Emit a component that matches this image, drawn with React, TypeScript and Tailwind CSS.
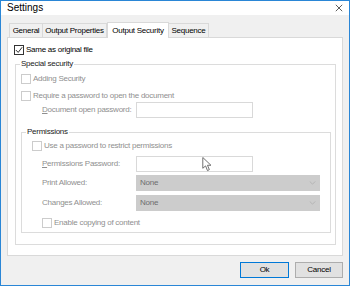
import React from "react";

function Box({ checked = false, disabled = false }: { checked?: boolean; disabled?: boolean }) {
  return (
    <span
      className={`flex h-[10px] w-[10px] shrink-0 items-center justify-center border bg-white ${
        disabled ? "border-[#cccccc]" : "border-[#333333]"
      }`}
    >
      {checked && (
        <svg viewBox="0 0 10 10" className="h-[8px] w-[8px]">
          <path d="M1 5 L4 8 L9 1.5" fill="none" stroke="#222" strokeWidth="1.2" />
        </svg>
      )}
    </span>
  );
}

function Check({ label, checked, disabled }: { label: string; checked?: boolean; disabled?: boolean }) {
  return (
    <div className="flex h-[12px] items-center gap-[2px] whitespace-nowrap">
      <Box checked={checked} disabled={disabled} />
      <span className={disabled ? "text-[#8f8f8f]" : "text-black"}>{label}</span>
    </div>
  );
}

function Field({ label, children }: { label: React.ReactNode; children: React.ReactNode }) {
  return (
    <div className="flex h-[16px] items-center">
      <span className="w-[94px] shrink-0 whitespace-nowrap text-[#8f8f8f]">{label}</span>
      {children}
    </div>
  );
}

function Select() {
  return (
    <div className="flex h-[16px] w-[184px] items-center justify-between bg-[#cccccc] pr-[4px] pl-[4px] text-[#6e6e6e]">
      <span>None</span>
      <svg viewBox="0 0 8 5" className="h-[4px] w-[7px]">
        <path d="M0.5 0.5 L4 4 L7.5 0.5" fill="none" stroke="#b0b0b0" strokeWidth="1" />
      </svg>
    </div>
  );
}

export default function App() {
  return (
    <div
      className="relative flex h-[286px] w-[350px] flex-col border border-[#2a86d6] bg-[#f0f0f0] text-[8px] leading-[12px] tracking-[-0.25px]"
      style={{ fontFamily: '"Liberation Sans", Arial, sans-serif' }}
    >
      {/* Title bar */}
      <div className="flex h-[14px] shrink-0 items-center justify-between bg-white pr-[6px] pl-[6px]">
        <span className="text-[10px] tracking-normal text-black">Settings</span>
        <svg viewBox="0 0 10 10" className="h-[8px] w-[8px]">
          <path d="M1 1 L9 9 M9 1 L1 9" stroke="#333" strokeWidth="1" />
        </svg>
      </div>

      {/* Tabs */}
      <div className="mt-[7px] flex h-[15px] items-end pl-[8px] whitespace-nowrap">
        <div className="flex h-[14px] w-[34px] items-center justify-center border border-b-0 border-[#d9d9d9] pt-[1px] text-black">
          General
        </div>
        <div className="flex h-[14px] w-[64px] items-center justify-center border border-b-0 border-l-0 border-[#d9d9d9] pt-[1px] text-black">
          Output Properties
        </div>
        <div className="relative z-10 -mb-px flex h-[16px] w-[62px] items-center justify-center border border-b-0 border-[#d9d9d9] bg-white text-black">
          Output Security
        </div>
        <div className="flex h-[14px] w-[40px] items-center justify-center border border-b-0 border-l-0 border-[#d9d9d9] pt-[1px] text-black">
          Sequence
        </div>
      </div>

      {/* Panel */}
      <div className="ml-[6px] flex h-[219px] w-[336px] flex-col border border-[#d9d9d9] bg-white pt-[6px]">
        <div className="pl-[6px]">
          <Check label="Same as original file" checked />
        </div>

        <fieldset className="mt-[2px] ml-[7px] w-[321px] border border-[#dcdcdc] pb-[11px]">
          <legend className="ml-[4px] px-[1px] text-[#222]">Special security</legend>
          <div className="mt-[3px] pl-[5px]">
            <Check label="Adding Security" disabled />
          </div>
          <div className="mt-[5px] pl-[5px]">
            <Check label="Require a password to open the document" disabled />
          </div>
          <div className="pl-[26px]">
            <Field
              label={
                <>
                  <span className="underline">D</span>ocument open password:
                </>
              }
            >
              <div className="h-[16px] w-[117px] border border-[#d9d9d9] bg-white" />
            </Field>
          </div>

          <fieldset className="mt-[8px] ml-[5px] w-[310px] border border-[#dcdcdc] pb-[3px]">
            <legend className="ml-[4px] px-[1px] text-[#222]">Permissions</legend>
            <div className="mt-[2px] pl-[10px]">
              <Check label="Use a password to restrict permissions" disabled />
            </div>
            <div className="mt-[4px] pl-[20px]">
              <Field
                label={
                  <>
                    <span className="underline">P</span>ermissions Password:
                  </>
                }
              >
                <div className="h-[16px] w-[117px] border border-[#d9d9d9] bg-white" />
              </Field>
            </div>
            <div className="mt-[3px] pl-[20px]">
              <Field label="Print Allowed:">
                <Select />
              </Field>
            </div>
            <div className="mt-[4px] pl-[20px]">
              <Field label="Changes Allowed:">
                <Select />
              </Field>
            </div>
            <div className="mt-[6px] pl-[20px]">
              <Check label="Enable copying of content" disabled />
            </div>
          </fieldset>
        </fieldset>
      </div>

      {/* Buttons */}
      <div className="mt-[6px] flex justify-end gap-[6px] pr-[6px]">
        <button className="flex h-[16px] w-[49px] items-center justify-center border border-[#0078d7] bg-[#e1e1e1] text-black">
          Ok
        </button>
        <button className="flex h-[16px] w-[48px] items-center justify-center border border-[#adadad] bg-[#e1e1e1] text-black">
          Cancel
        </button>
      </div>

      {/* Mouse pointer */}
      <svg viewBox="0 0 10 16" className="pointer-events-none absolute top-[156px] left-[201px] h-[15px] w-[10px]">
        <path d="M0.5 0.5 L0.5 12 L3.5 9.5 L5.5 14.5 L7.5 13.5 L5.5 8.8 L9.2 8.8 Z" fill="white" stroke="#666" strokeWidth="1" />
      </svg>
    </div>
  );
}
